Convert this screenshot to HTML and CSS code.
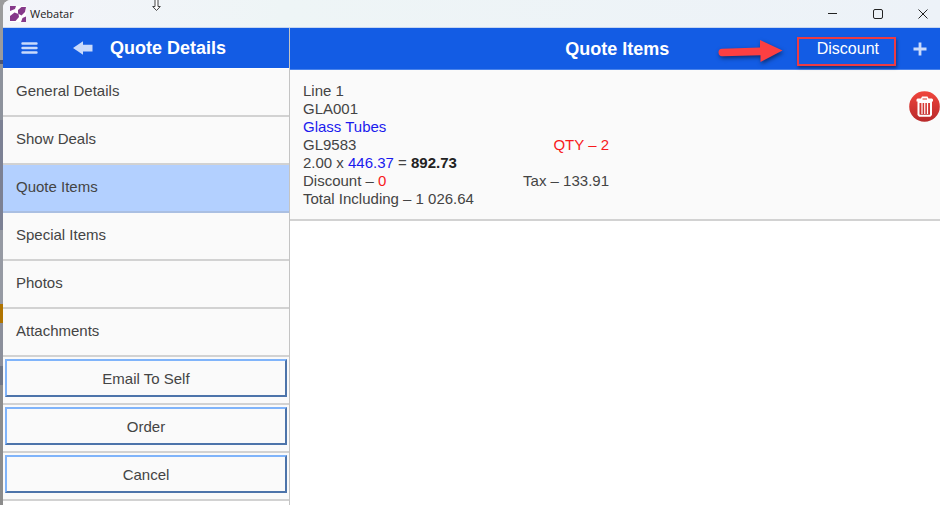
FILE: index.html
```
<!doctype html>
<html lang="en">
<head>
  <meta charset="UTF-8">
  <title>Webatar</title>
  <meta name="viewport" content="width=device-width, initial-scale=1.0">
  <link rel="stylesheet" href="styles.css">
</head>
<body>
  <div class="backdrop"></div>
  <div class="window">
    <div class="titlebar">
      <svg class="logo" width="16" height="16" viewBox="0 0 16 16">
        <rect width="16" height="16" fill="#fff"/>
        <g fill="#86398a">
          <path d="M0 0h6L5 3 0 5z"/>
          <path d="M8 4l3.500-3H16l-1 5-3.500 3.500L8 7.500z"/>
          <path d="M0 15v-5l4.500-3.500L8.500 8 9 11l-3.500 4z"/>
          <path d="M11 16l1.500-4L16 10.500V16z"/>
        </g>
      </svg>
      <span class="app-name">Webatar</span>
      <div class="win-buttons">
        <button aria-label="Minimize"><svg width="12" height="12" viewBox="0 0 12 12"><path d="M1 5.5h9"/></svg></button>
        <button aria-label="Maximize"><svg width="12" height="12" viewBox="0 0 12 12"><rect x="1.5" y="1.5" width="9" height="9" rx="1.5"/></svg></button>
        <button aria-label="Close"><svg width="12" height="12" viewBox="0 0 12 12"><path d="M1.5 1.5l9 9M10.5 1.5l-9 9"/></svg></button>
      </div>
    </div>

    <div class="panes">
      <aside class="sidebar">
        <header class="bar">
          <button class="menu-btn" aria-label="Menu">
            <svg width="18" height="14" viewBox="0 0 18 14"><path d="M1.5 2.5h14M1.5 7h14M1.5 11.5h14" stroke="#c9dafb" stroke-width="2.4" stroke-linecap="round"/></svg>
          </button>
          <button class="back-btn" aria-label="Back">
            <svg width="20" height="14" viewBox="0 0 20 14"><path d="M0 7l10-6.7v3.5h9.5v6.6H10v3.3z" fill="#c9dafb"/></svg>
          </button>
          <h1>Quote Details</h1>
        </header>
        <nav class="menu">
          <a href="#">General Details</a>
          <a href="#">Show Deals</a>
          <a href="#" class="active">Quote Items</a>
          <a href="#">Special Items</a>
          <a href="#">Photos</a>
          <a href="#">Attachments</a>
        </nav>
        <div class="action"><button>Email To Self</button></div>
        <div class="action"><button>Order</button></div>
        <div class="action"><button>Cancel</button></div>
      </aside>

      <main class="content">
        <header class="bar bar-items">
          <h1>Quote Items</h1>
          <button class="discount-btn">Discount</button>
          <button aria-label="Add">
            <svg width="14" height="14" viewBox="0 0 14 14"><path d="M7 0.5v13M0.5 7h13" stroke="#c9dafb" stroke-width="2.8"/></svg>
          </button>
          <div class="highlight"></div>
          <svg class="pointer" width="70" height="32" viewBox="0 0 70 32">
            <path d="M5 11.800L43 10.500V3l22.500 10.500L43.500 25v-6.800L5.500 19.200a3.700 3.700 0 0 1 -.5 -7.400z" fill="#fc3f42"/>
          </svg>
        </header>
        <div class="item">
          <div class="item-text">
            <div>Line 1</div>
            <div>GLA001</div>
            <div class="blue">Glass Tubes</div>
            <div class="split"><span>GL9583</span><span class="red">QTY – 2</span></div>
            <div>2.00 x <span class="blue">446.37</span> = <b>892.73</b></div>
            <div class="split"><span>Discount – <span class="red">0</span></span><span>Tax – 133.91</span></div>
            <div>Total Including – 1 026.64</div>
          </div>
          <button class="delete-btn" aria-label="Delete">
            <svg width="31" height="31" viewBox="0 0 31 31">
              <defs>
                <linearGradient id="red" x1="0" y1="0" x2="0" y2="1">
                  <stop offset="0" stop-color="#f0453c"/>
                  <stop offset="1" stop-color="#b8292a"/>
                </linearGradient>
              </defs>
              <circle cx="15.500" cy="15.500" r="15.300" fill="url(#red)"/>
              <path d="M7.500 10.500V8.500l1-1h3.500l1-2h5.500l1 2h3.500l1 1v2z" fill="#fff"/>
              <path d="M13.500 8h4.500" stroke="#d8392f"/>
              <path d="M9.500 11v12.700l1 1h10.500l1-1V11z" fill="none" stroke="#fff" stroke-width="2"/>
              <path d="M13 12v11M15.750 12v11M18.500 12v11" stroke="#fff" stroke-width="1.200"/>
            </svg>
          </button>
        </div>
      </main>
    </div>
  </div>

  <svg class="cursor" width="10" height="13" viewBox="0 0 10 13">
    <path d="M4 0v6.500H1.700L5.500 10.500 9.300 6.500H7V0" fill="#fff" stroke="#444"/>
  </svg>
</body>
</html>
```

FILE: styles.css
```
* {
  box-sizing: border-box;
}

body {
  margin: 0;
  display: flex;
  height: 100vh;
  overflow: hidden;
  background: #9b9b9d;
  font-family: "Liberation Sans", Arial, sans-serif;
  font-size: 15px;
  color: #444;
}

button {
  font: inherit;
  color: inherit;
  border: none;
  padding: 0;
  background: none;
  cursor: pointer;
}

svg {
  display: block;
}

h1 {
  margin: 0;
  font-size: 18px;
  line-height: 24px;
}

/* sliver of the desktop behind the window */
.backdrop {
  flex: 0 0 3px;
  background: linear-gradient(#9b9b9d 0 60px, #4c5674 60px 64px, #8d929c 64px 120px,
    #7c8194 120px 230px, #969aa3 230px 304px, #b07400 304px 323px,
    #8b8f9b 323px 366px, #6f7686 366px 385px, #8c8c8c 385px);
}

.window {
  flex: 1;
  display: flex;
  flex-direction: column;
  background: #fff;
  border-radius: 8px 0 0 0;
  overflow: hidden;
}

.titlebar {
  flex: none;
  height: 28px;
  display: flex;
  align-items: center;
  padding-left: 7px;
  background: linear-gradient(90deg, #f3f4fa, #eef5f6 30%, #edf2f8);
  border-bottom: 1px solid #c5d6f2;
}

.app-name {
  flex: 1;
  margin-left: 4px;
  font-family: "Open Sans", sans-serif;
  font-size: 11px;
  color: #1a1a1a;
}

.win-buttons {
  display: flex;
  gap: 33px;
  padding-right: 11px;
}

.win-buttons svg {
  fill: none;
  stroke: #222;
}

.panes {
  flex: 1;
  display: flex;
  min-height: 0;
}

.sidebar {
  flex: 0 0 287px;
  border-right: 1px solid #c4c4c4;
}

.content {
  flex: 1;
}

.bar {
  display: flex;
  align-items: center;
  height: 40px;
  background: #135ce4;
  color: #fff;
}

.menu-btn {
  margin-left: 18px;
}

.back-btn {
  margin: 0 17px 0 34px;
}

.bar-items {
  position: relative;
  height: 42px;
  padding-right: 13px;
  border-bottom: 1px solid #4a83ea;
}

.bar-items h1 {
  flex: 1;
  padding-left: 128px;
  text-align: center;
}

.discount-btn {
  margin-right: 34px;
  font-size: 16px;
  line-height: 24px;
}

.highlight {
  position: absolute;
  top: 9px;
  right: 44px;
  width: 99px;
  height: 29px;
  border: 2px solid #ee3b43;
  box-shadow: 1px 2px 3px rgba(0, 0, 0, 0.4);
  pointer-events: none;
}

.pointer {
  position: absolute;
  top: 9px;
  right: 153px;
  filter: drop-shadow(1px 2px 2px rgba(0, 0, 0, 0.5));
}

.menu {
  padding-top: 1px;
}

.menu a {
  display: block;
  height: 48px;
  padding-left: 13px;
  line-height: 44px;
  color: inherit;
  text-decoration: none;
  background: #fafafa;
  border-bottom: 2px solid #d2d2d2;
}

.menu a.active {
  background: #b3d0ff;
  border-color: #aabfe2;
}

.action {
  height: 48px;
  padding: 2px 2px 6px;
  background: #fafafa;
  border-bottom: 2px solid #d2d2d2;
}

.action button {
  width: 100%;
  height: 38px;
  border: 2px solid;
  border-color: #80b4fa #4d74aa #4d74aa #80b4fa;
}

.item {
  display: flex;
  justify-content: space-between;
  align-items: flex-start;
  padding: 12px 0 11px 13px;
  background: #fafafa;
  border-bottom: 2px solid #d2d2d2;
}

.item-text {
  flex: 0 1 306px;
  line-height: 18px;
}

.split {
  display: flex;
  justify-content: space-between;
}

.delete-btn {
  margin-top: 9px;
}

.blue {
  color: #1a1aee;
}

.red {
  color: #f8191c;
}

.item b {
  color: #222;
}

.cursor {
  position: absolute;
  top: 0;
  left: 151px;
}
```
